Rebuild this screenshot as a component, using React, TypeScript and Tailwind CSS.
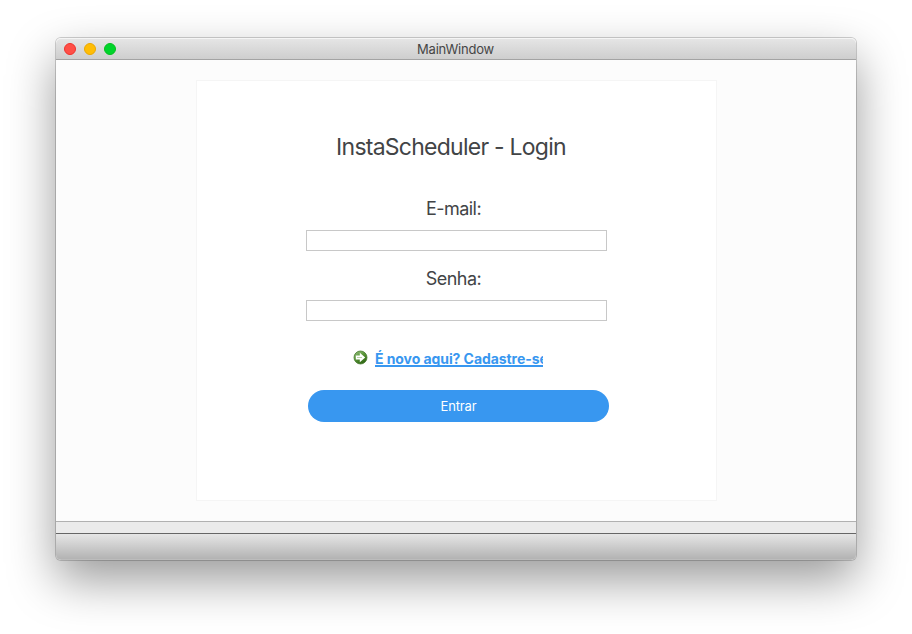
import React from "react";

function TitleBar() {
  return (
    <header className="grid h-[22px] shrink-0 grid-cols-[1fr_auto_1fr] items-center rounded-t-[5px] border-b border-[#a3a3a3] bg-linear-to-b from-[#e6e6e6] to-[#cecece] px-2 shadow-[inset_0_1px_0_#f5f5f5]">
      <div className="flex gap-2">
        <span className="size-3 rounded-full border border-[#f0322c] bg-[#ff4f47]" />
        <span className="size-3 rounded-full border border-[#eba800] bg-[#ffbd05]" />
        <span className="size-3 rounded-full border border-[#04bf1d] bg-[#00d42b]" />
      </div>
      <h1 className="mr-[1px] text-[13px] leading-[20px] tracking-[-0.2px] text-[#464646]">MainWindow</h1>
    </header>
  );
}

function GoIcon() {
  return (
    <svg width="15" height="15" viewBox="0 0 15 15" className="mb-[3px] shrink-0">
      <defs>
        <linearGradient id="go" x1="0" y1="0" x2="0.6" y2="1">
          <stop offset="0" stopColor="#9cc487" />
          <stop offset="0.5" stopColor="#5a9638" />
          <stop offset="1" stopColor="#2f6614" />
        </linearGradient>
      </defs>
      <circle cx="7.5" cy="7.5" r="6.5" fill="url(#go)" stroke="#457a2c" strokeWidth="0.8" />
      <path d="M2.8 5.5h4V2.8L12.2 7.5 6.8 12.2V9.5h-4z" fill="#fff" />
      <path d="M4 7.5h5" stroke="#b9d6a8" strokeWidth="1" />
    </svg>
  );
}

function Field({ label, type, id }: { label: string; type: string; id: string }) {
  return (
    <div className="flex h-[70px] w-[301px] flex-col">
      <label htmlFor={id} className="mr-[6px] h-[32px] pt-px text-center text-[18px] leading-[20px] tracking-[-0.55px] text-[#424446]">
        {label}
      </label>
      <input id={id} type={type} className="h-[21px] w-[301px] border border-[#c8c8c8] bg-white px-1 text-[13px] outline-none" />
    </div>
  );
}

export default function App() {
  return (
    <div className="h-[634px] w-[912px] overflow-hidden bg-white pt-[38px] pl-[56px] font-['Inter','Liberation_Sans',sans-serif]">
      <main className="flex h-[522px] w-[800px] flex-col rounded-[5px] bg-[#fcfcfc] shadow-[0_0_0_1px_rgba(0,0,0,0.18),0_20px_48px_rgba(0,0,0,0.4)]">
        <TitleBar />
        <section className="h-[461px] shrink-0 pt-5 pl-[140px]">
          <form className="flex h-[421px] w-[521px] flex-col border border-[#f5f5f5] bg-white pl-[109px]">
            <h2 className="mt-[51px] h-[66px] w-[290px] text-center text-[23px] leading-[30px] tracking-[-0.75px] whitespace-nowrap text-[#424446]">
              InstaScheduler - Login
            </h2>
            <Field label="E-mail:" type="email" id="email" />
            <Field label="Senha:" type="password" id="senha" />
            <div className="mt-[11px] ml-[47px] flex h-5 w-[190px] items-center">
              <GoIcon />
              <a
                href="#"
                className="ml-[7px] h-[18px] w-[168px] overflow-hidden text-[14px] leading-[18px] font-bold tracking-[-0.07px] whitespace-nowrap text-[#3897f0] underline decoration-2 underline-offset-1 [text-decoration-skip-ink:none]"
              >
                É novo aqui? Cadastre-se
              </a>
            </div>
            <button type="button" className="mt-[21px] ml-[2px] h-8 w-[301px] rounded-full bg-[#3897f0] pt-px text-[13px] tracking-[-0.15px] text-white">
              Entrar
            </button>
          </form>
        </section>
        <div className="h-[13px] shrink-0 border-t border-b border-t-[#b1b1b1] border-b-[#666] bg-[#ebebeb]" />
        <footer className="flex-1 rounded-b-[5px] border-b border-[#bcbcbc] bg-linear-to-b from-[#e6e6e6] to-[#b3b3b3]" />
      </main>
    </div>
  );
}
